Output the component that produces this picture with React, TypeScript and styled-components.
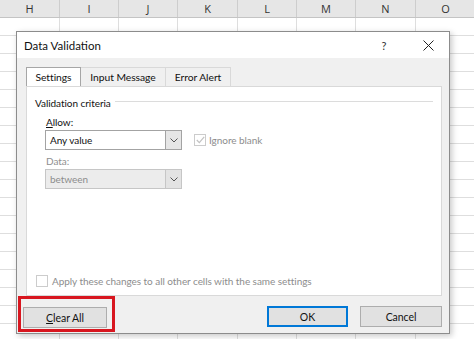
import styled, { createGlobalStyle } from 'styled-components';

const GlobalStyle = createGlobalStyle`
    html, body {
        margin: 0;
        padding: 0;
        background: #ffffff;
    }
    body {
        font-family: Lato, 'Open Sans', 'Liberation Sans', sans-serif;
        font-size: 10px;
        letter-spacing: -0.05px;
        color: #000;
    }
`;

const COLUMNS = [
    { name: 'H', width: 60 },
    { name: 'I', width: 59 },
    { name: 'J', width: 59 },
    { name: 'K', width: 60 },
    { name: 'L', width: 59 },
    { name: 'M', width: 59 },
    { name: 'N', width: 60 },
    { name: 'O', width: 60 },
];

const ROW_COUNT = 18;

const Sheet = styled.div`
    position: relative;
    width: 474px;
    height: 339px;
    overflow: hidden;
    background: #ffffff;
`;

const HeaderRow = styled.div`
    display: flex;
    height: 18px;
    background: #e6e6e6;
    border-bottom: 1px solid #c4c4c4;
    box-sizing: border-box;
`;

const HeaderCell = styled.div<{ $w: number }>`
    width: ${(p) => p.$w}px;
    flex: none;
    box-sizing: border-box;
    border-right: 1px solid #cdcdcd;
    display: flex;
    align-items: center;
    justify-content: center;
    font-family: 'Open Sans', sans-serif;
    font-size: 11px;
    letter-spacing: 0;
    color: #333;
`;

const GridRow = styled.div`
    display: flex;
    height: 18px;
    box-sizing: border-box;
    border-bottom: 1px solid #dedede;
`;

const GridCell = styled.div<{ $w: number }>`
    width: ${(p) => p.$w}px;
    flex: none;
    box-sizing: border-box;
    border-right: 1px solid #dedede;
`;

const Dialog = styled.div`
    position: absolute;
    left: 16px;
    top: 31px;
    width: 434px;
    height: 303px;
    box-sizing: border-box;
    background: #f0f0f0;
    border: 1px solid #8c8c8c;
    box-shadow: 2px 2px 6px rgba(0, 0, 0, 0.22);
    display: flex;
    flex-direction: column;
`;

const TitleBar = styled.div`
    height: 26px;
    background: #ffffff;
    display: flex;
    align-items: center;
    padding: 0 6px 0 7px;
    flex: none;
`;

const Title = styled.div`
    font-size: 11.5px;
    letter-spacing: 0;
    flex: 1;
    color: #111;
`;

const HelpMark = styled.div`
    width: 30px;
    text-align: center;
    font-size: 11px;
    color: #333;
    margin-right: 14px;
`;

const CloseButton = styled.div`
    width: 30px;
    height: 26px;
    display: flex;
    align-items: center;
    justify-content: center;
`;

const Body = styled.div`
    padding: 9px 7px 0 9px;
    display: flex;
    flex-direction: column;
`;

const TabStrip = styled.div`
    display: flex;
    height: 19px;
    align-items: flex-end;
`;

const Tab = styled.div<{ $active?: boolean; $w: number }>`
    width: ${(p) => p.$w}px;
    height: 19px;
    box-sizing: border-box;
    display: flex;
    align-items: center;
    justify-content: center;
    background: ${(p) => (p.$active ? '#ffffff' : '#f0f0f0')};
    border: 1px solid ${(p) => (p.$active ? '#a6a6a6' : '#d9d9d9')};
    border-left-width: ${(p) => (p.$active ? 1 : 0)}px;
    border-bottom: none;
    color: #111;
    font-size: 10.3px;
`;

const Panel = styled.div`
    height: 210px;
    box-sizing: border-box;
    background: #ffffff;
    border: 1px solid #d9d9d9;
    padding: 9px 8px 0 8px;
    display: flex;
    flex-direction: column;
`;

const GroupTitle = styled.div`
    display: flex;
    align-items: center;
    gap: 4px;
    height: 14px;
    color: #111;

    &::after {
        content: '';
        flex: 1;
        height: 1px;
        background: #dcdcdc;
        margin-top: -3px;
    }
`;

const FieldLabel = styled.div<{ $disabled?: boolean }>`
    margin: ${(p) => (p.$disabled ? 5 : 6)}px 0 0 11px;
    height: 13px;
    color: ${(p) => (p.$disabled ? '#8f8f8f' : '#111')};
`;

const FieldRow = styled.div`
    display: flex;
    align-items: center;
    margin: 1px 0 0 10px;
    gap: 12px;
`;

const Combo = styled.div<{ $disabled?: boolean }>`
    width: 137px;
    height: 20px;
    box-sizing: border-box;
    display: flex;
    border: 1px solid ${(p) => (p.$disabled ? '#c6c6c6' : '#a3a3a3')};
    background: ${(p) => (p.$disabled ? '#ececec' : '#ffffff')};
    color: ${(p) => (p.$disabled ? '#8d8d8d' : '#111')};
`;

const ComboText = styled.div`
    flex: 1;
    display: flex;
    align-items: center;
    padding-left: 4px;
`;

const ComboButton = styled.div<{ $disabled?: boolean }>`
    width: 15px;
    flex: none;
    display: flex;
    align-items: center;
    justify-content: center;
    background: ${(p) => (p.$disabled ? '#e3e3e3' : '#e6e6e6')};
    border-left: 1px solid ${(p) => (p.$disabled ? '#c6c6c6' : '#a3a3a3')};
`;

const CheckRow = styled.label`
    display: flex;
    align-items: center;
    gap: 3px;
    color: #8d8d8d;
`;

const CheckBox = styled.span`
    width: 12px;
    height: 12px;
    box-sizing: border-box;
    border: 1px solid #cccccc;
    background: #ffffff;
    display: flex;
    align-items: center;
    justify-content: center;
    flex: none;
`;

const Spacer = styled.div`
    flex: 1;
`;

const ApplyRow = styled(CheckRow)`
    margin: 0 0 8px 1px;
    gap: 4px;
`;

const Footer = styled.div`
    display: flex;
    align-items: flex-start;
    padding: 0 7px 0 1px;
    flex: 1;
`;

const Highlight = styled.div`
    border: 3px solid #d8161f;
    padding: 8px 5px 2px 2px;
    height: 36px;
    box-sizing: border-box;
`;

const Button = styled.div<{ $default?: boolean; $w: number }>`
    width: ${(p) => p.$w}px;
    height: 21px;
    box-sizing: border-box;
    display: flex;
    align-items: center;
    justify-content: center;
    background: #e1e1e1;
    border: 1px solid ${(p) => (p.$default ? '#0078d7' : '#adadad')};
    box-shadow: ${(p) => (p.$default ? 'inset 0 0 0 1px #0078d7' : 'none')};
    color: #111;
    font-size: 10.5px;
`;

const DialogButtons = styled.div`
    margin-left: auto;
    margin-top: 10px;
    display: flex;
    gap: 12px;
`;

function Chevron() {
    return (
        <svg width="8" height="5" viewBox="0 0 8 5">
            <path d="M0.5 0.5 L4 4 L7.5 0.5" fill="none" stroke="#555" strokeWidth="1" />
        </svg>
    );
}

function DataValidation() {
    return (
        <Dialog>
            <TitleBar>
                <Title>Data Validation</Title>
                <HelpMark>?</HelpMark>
                <CloseButton>
                    <svg width="11" height="11" viewBox="0 0 11 11">
                        <path d="M0.5 0.5 L10.5 10.5 M10.5 0.5 L0.5 10.5" stroke="#222" strokeWidth="1" />
                    </svg>
                </CloseButton>
            </TitleBar>
            <Body>
                <TabStrip>
                    <Tab $active $w={55}>Settings</Tab>
                    <Tab $w={85}>Input Message</Tab>
                    <Tab $w={65}>Error Alert</Tab>
                </TabStrip>
                <Panel>
                    <GroupTitle>Validation criteria</GroupTitle>
                    <FieldLabel>
                        <u>A</u>llow:
                    </FieldLabel>
                    <FieldRow>
                        <Combo>
                            <ComboText>Any value</ComboText>
                            <ComboButton>
                                <Chevron />
                            </ComboButton>
                        </Combo>
                        <CheckRow>
                            <CheckBox>
                                <svg width="9" height="8" viewBox="0 0 9 8">
                                    <path d="M0.8 4 L3.3 6.6 L8.2 0.8" fill="none" stroke="#c2c2c2" strokeWidth="1.2" />
                                </svg>
                            </CheckBox>
                            Ignore blank
                        </CheckRow>
                    </FieldRow>
                    <FieldLabel $disabled>Data:</FieldLabel>
                    <FieldRow>
                        <Combo $disabled>
                            <ComboText>between</ComboText>
                            <ComboButton $disabled>
                                <Chevron />
                            </ComboButton>
                        </Combo>
                    </FieldRow>
                    <Spacer />
                    <ApplyRow>
                        <CheckBox />
                        Apply these changes to all other cells with the same settings
                    </ApplyRow>
                </Panel>
            </Body>
            <Footer>
                <Highlight>
                    <Button $w={84}>
                        <span>
                            <u>C</u>lear All
                        </span>
                    </Button>
                </Highlight>
                <DialogButtons>
                    <Button $default $w={81}>OK</Button>
                    <Button $w={82}>Cancel</Button>
                </DialogButtons>
            </Footer>
        </Dialog>
    );
}

export default function App() {
    return (
        <Sheet>
            <GlobalStyle />
            <HeaderRow>
                {COLUMNS.map((c) => (
                    <HeaderCell key={c.name} $w={c.width}>
                        {c.name}
                    </HeaderCell>
                ))}
            </HeaderRow>
            {Array.from({ length: ROW_COUNT }).map((_, r) => (
                <GridRow key={r}>
                    {COLUMNS.map((c) => (
                        <GridCell key={c.name} $w={c.width} />
                    ))}
                </GridRow>
            ))}
            <DataValidation />
        </Sheet>
    );
}
